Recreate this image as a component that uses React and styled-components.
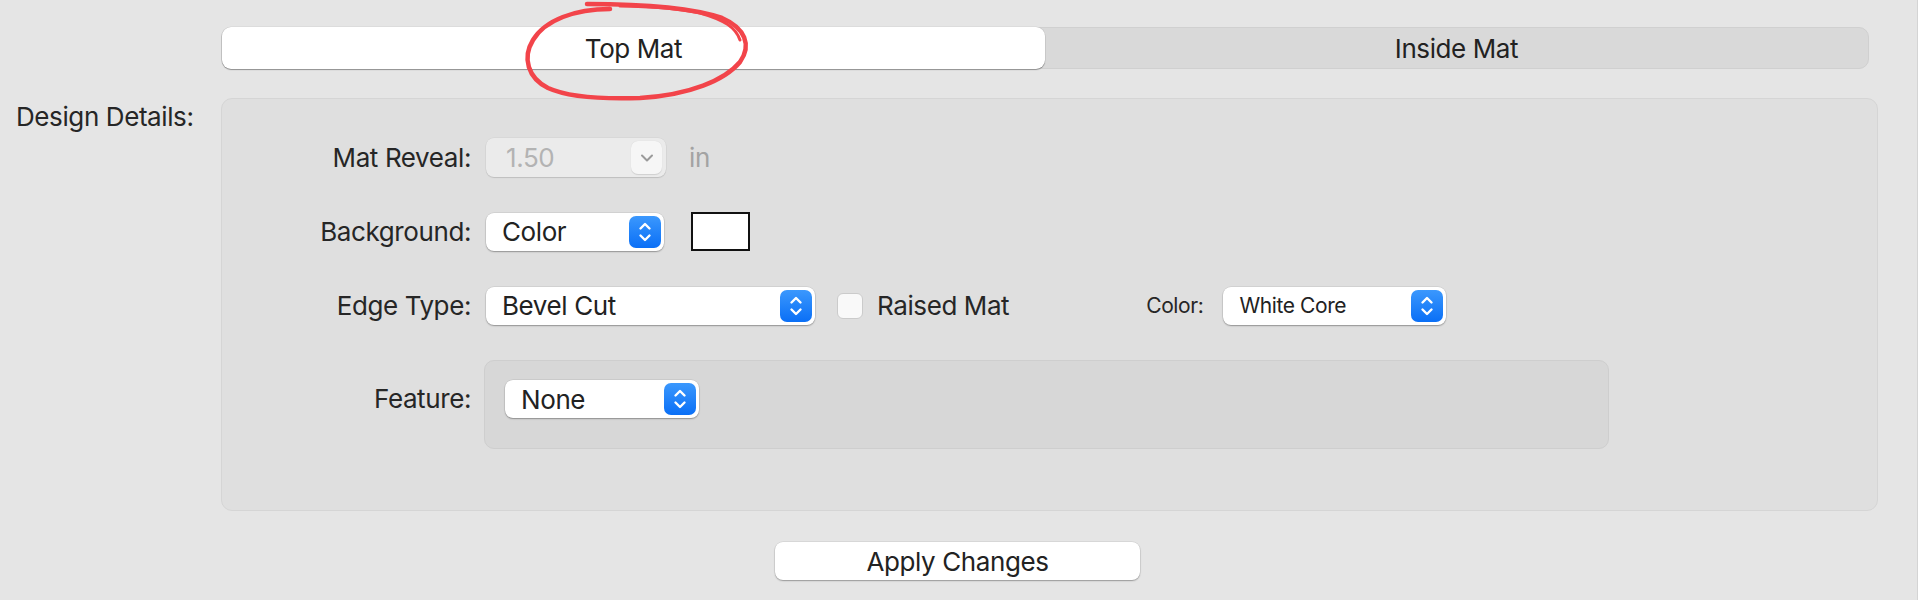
import React from "react"
import styled, { createGlobalStyle } from "styled-components"

const GlobalStyle = createGlobalStyle`
  html, body {
    margin: 0;
    padding: 0;
    background: #e5e5e5;
  }
  body {
    font-family: Inter, "Liberation Sans", sans-serif;
    color: #262626;
    letter-spacing: -0.4px;
    -webkit-font-smoothing: antialiased;
  }
`

const Chevrons = () => (
  <svg width="14" height="22" viewBox="0 0 14 22" fill="none">
    <path d="M2.5 7.5 L7 3 L11.5 7.5" stroke="#fff" strokeWidth="2.4" strokeLinecap="round" strokeLinejoin="round" />
    <path d="M2.5 14.5 L7 19 L11.5 14.5" stroke="#fff" strokeWidth="2.4" strokeLinecap="round" strokeLinejoin="round" />
  </svg>
)

const ChevronDown = () => (
  <svg width="16" height="12" viewBox="0 0 16 12" fill="none">
    <path d="M3 3.5 L8 8.5 L13 3.5" stroke="#9a9a9a" strokeWidth="2" strokeLinecap="round" strokeLinejoin="round" />
  </svg>
)

const Scribble = () => (
  <Annotation width="235" height="104" viewBox="518 0 235 104" fill="none">
    <path
      d="M610 9 C575 9, 545 20, 533 40 C522 58, 528 78, 548 88 C570 98, 610 99, 640 98 C690 95, 725 80, 740 62 C752 45, 745 28, 722 18 C690 7, 640 4, 587 4"
      stroke="#f2444a"
      strokeWidth="4.5"
      strokeLinecap="round"
    />
    <path
      d="M740 40 C736 28, 725 20, 700 13 C675 8, 640 6, 620 6"
      stroke="#f2444a"
      strokeWidth="3"
      strokeLinecap="round"
    />
  </Annotation>
)

const PopUp = ({ width, small, children }) => (
  <PopUpBox $width={width}>
    <PopUpText $small={small}>{children}</PopUpText>
    <StepperButton>
      <Chevrons />
    </StepperButton>
  </PopUpBox>
)

const App = () => (
  <Page>
    <GlobalStyle />
    <Layout>
      <div />
      <TabBar>
        <Segment $active>Top Mat</Segment>
        <Segment>Inside Mat</Segment>
      </TabBar>

      <SideLabel>Design Details:</SideLabel>
      <Panel>
        <Row>
          <FieldLabel>Mat Reveal:</FieldLabel>
          <DisabledCombo>
            <DisabledText>1.50</DisabledText>
            <DisabledButton>
              <ChevronDown />
            </DisabledButton>
          </DisabledCombo>
          <Unit>in</Unit>
        </Row>

        <Row>
          <FieldLabel>Background:</FieldLabel>
          <PopUp width={178}>Color</PopUp>
          <Swatch />
        </Row>

        <Row>
          <FieldLabel>Edge Type:</FieldLabel>
          <PopUp width={329}>Bevel Cut</PopUp>
          <CheckItem>
            <CheckBox />
            <CheckText>Raised Mat</CheckText>
          </CheckItem>
          <SmallLabel>Color:</SmallLabel>
          <PopUp width={223} small>
            White Core
          </PopUp>
        </Row>

        <FeatureRow>
          <FieldLabel $top>Feature:</FieldLabel>
          <SubPanel>
            <PopUp width={194}>None</PopUp>
          </SubPanel>
        </FeatureRow>
      </Panel>

      <Footer>
        <PushButton>Apply Changes</PushButton>
      </Footer>
    </Layout>
    <Scribble />
  </Page>
)

const Page = styled.div`
  position: relative;
  width: 1918px;
  height: 600px;
  overflow: hidden;
  background: #e5e5e5;
  box-shadow: inset -1px 0 0 #d4d4d4;
`

const Layout = styled.div`
  display: grid;
  grid-template-columns: 221px 1657px;
  align-items: start;
`

const TabBar = styled.div`
  display: flex;
  margin-top: 27px;
  width: 1648px;
  height: 42px;
  box-sizing: border-box;
  background: #d9d9d9;
  border: 1px solid #d0d0d0;
  border-radius: 10px;
`

const Segment = styled.div`
  flex: 1;
  display: flex;
  align-items: center;
  justify-content: center;
  margin: -1px 0;
  font-size: 26px;
  color: #222;
  border-radius: 9px;
  background: ${(p) => (p.$active ? "#ffffff" : "transparent")};
  box-shadow: ${(p) =>
    p.$active ? "0 1px 1px rgba(0,0,0,0.35), 0 0 0 0.5px rgba(0,0,0,0.08)" : "none"};
`

const SideLabel = styled.div`
  padding: 32px 0 0 16px;
  font-size: 26px;
  line-height: 32px;
  white-space: nowrap;
`

const Panel = styled.div`
  margin-top: 29px;
  height: 413px;
  box-sizing: border-box;
  background: #dfdfdf;
  border: 1px solid #d5d5d5;
  border-radius: 11px;
  padding-top: 39px;
  display: flex;
  flex-direction: column;
  gap: 35px;
`

const Row = styled.div`
  display: flex;
  align-items: center;
  height: 39px;
`

const FeatureRow = styled.div`
  display: flex;
  align-items: flex-start;
`

const FieldLabel = styled.div`
  width: 249px;
  flex-shrink: 0;
  margin-right: 15px;
  margin-top: ${(p) => (p.$top ? "20px" : "0")};
  text-align: right;
  font-size: 26px;
  line-height: 38px;
  color: #262626;
`

const DisabledCombo = styled.div`
  display: flex;
  align-items: center;
  justify-content: space-between;
  width: 180px;
  height: 39px;
  box-sizing: border-box;
  padding: 0 4px 0 20px;
  background: #ebebeb;
  border-radius: 8px;
  box-shadow: 0 1px 1px rgba(0,0,0,0.12), 0 0 0 0.5px rgba(0,0,0,0.06);
`

const DisabledText = styled.span`
  font-size: 26px;
  color: #b3b3b3;
`

const DisabledButton = styled.div`
  display: flex;
  align-items: center;
  justify-content: center;
  width: 31px;
  height: 33px;
  background: #f6f6f6;
  border-radius: 7px;
  box-shadow: 0 0.5px 1px rgba(0,0,0,0.12);
`

const Unit = styled.span`
  margin-left: 23px;
  font-size: 26px;
  color: #a3a3a3;
`

const PopUpBox = styled.div`
  display: flex;
  align-items: center;
  justify-content: space-between;
  width: ${(p) => p.$width}px;
  height: 38px;
  flex-shrink: 0;
  box-sizing: border-box;
  padding: 0 3px 0 16px;
  background: #ffffff;
  border-radius: 8px;
  box-shadow: 0 1px 1.5px rgba(0,0,0,0.3), 0 0 0 0.5px rgba(0,0,0,0.1);
`

const PopUpText = styled.span`
  font-size: ${(p) => (p.$small ? "21px" : "26px")};
  color: #222;
`

const StepperButton = styled.div`
  display: flex;
  align-items: center;
  justify-content: center;
  width: 32px;
  height: 32px;
  border-radius: 7px;
  background: linear-gradient(#3b98fd, #0a6ff6);
`

const Swatch = styled.div`
  width: 59px;
  height: 39px;
  margin-left: 27px;
  box-sizing: border-box;
  background: #ffffff;
  border: 2px solid #111;
`

const CheckItem = styled.label`
  display: flex;
  align-items: center;
  margin-left: 22px;
`

const CheckBox = styled.span`
  width: 26px;
  height: 26px;
  box-sizing: border-box;
  background: #f9f9f9;
  border: 1px solid #cbcbcb;
  border-radius: 6px;
`

const CheckText = styled.span`
  margin-left: 14px;
  font-size: 26px;
  color: #262626;
`

const SmallLabel = styled.span`
  margin-left: 137px;
  margin-right: 20px;
  font-size: 21px;
  color: #262626;
`

const SubPanel = styled.div`
  width: 1125px;
  height: 89px;
  box-sizing: border-box;
  margin-left: -2px;
  padding: 19px 0 0 20px;
  background: #d7d7d7;
  border: 1px solid #cecece;
  border-radius: 10px;
`

const Footer = styled.div`
  grid-column: 1 / -1;
  display: flex;
  justify-content: center;
  margin-top: 31px;
  padding-left: 37px;
`

const PushButton = styled.div`
  display: flex;
  align-items: center;
  justify-content: center;
  width: 365px;
  height: 38px;
  background: #ffffff;
  border-radius: 8px;
  font-size: 26px;
  color: #222;
  box-shadow: 0 1px 1.5px rgba(0,0,0,0.3), 0 0 0 0.5px rgba(0,0,0,0.1);
`

const Annotation = styled.svg`
  position: absolute;
  left: 518px;
  top: 0;
  pointer-events: none;
`

export default App
